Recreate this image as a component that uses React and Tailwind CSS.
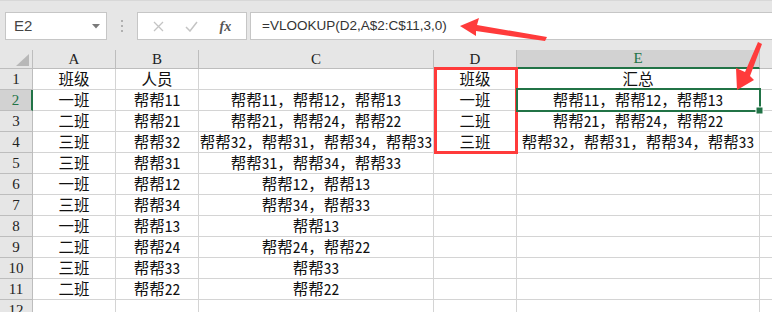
import React from "react"

const cols = [
  { key: "A", w: "w-[83px]" },
  { key: "B", w: "w-[83px]" },
  { key: "C", w: "w-[235px]" },
  { key: "D", w: "w-[83px]" },
  { key: "E", w: "w-[243px]" },
]

const rows = [
  ["班级", "人员", "", "班级", "汇总"],
  ["一班", "帮帮11", "帮帮11，帮帮12，帮帮13", "一班", "帮帮11，帮帮12，帮帮13"],
  ["二班", "帮帮21", "帮帮21，帮帮24，帮帮22", "二班", "帮帮21，帮帮24，帮帮22"],
  ["三班", "帮帮32", "帮帮32，帮帮31，帮帮34，帮帮33", "三班", "帮帮32，帮帮31，帮帮34，帮帮33"],
  ["三班", "帮帮31", "帮帮31，帮帮34，帮帮33", "", ""],
  ["一班", "帮帮12", "帮帮12，帮帮13", "", ""],
  ["三班", "帮帮34", "帮帮34，帮帮33", "", ""],
  ["一班", "帮帮13", "帮帮13", "", ""],
  ["二班", "帮帮24", "帮帮24，帮帮22", "", ""],
  ["三班", "帮帮33", "帮帮33", "", ""],
  ["二班", "帮帮22", "帮帮22", "", ""],
  ["", "", "", "", ""],
]

const cjk = { fontFamily: '"Noto Sans Mono CJK SC", "Noto Sans CJK SC", sans-serif' }
const serif = { fontFamily: '"Liberation Serif", serif' }
const sans = { fontFamily: '"Liberation Sans", Arial, sans-serif' }

function Toolbar() {
  return (
    <div className="h-[50px] bg-[#e6e6e6] border-t border-[#d8d8d8] flex items-start pt-[11px]">
      <div className="ml-[5px] w-[102px] h-[28px] bg-white border border-[#c6c6c6] flex items-center justify-between pl-[8px] pr-[6px]">
        <span className="text-[15px] text-[#444]" style={sans}>E2</span>
        <svg width="8" height="5" viewBox="0 0 8 5"><path d="M0 0h8L4 4.5z" fill="#7a7a7a" /></svg>
      </div>
      <div className="w-[30px] h-[28px] flex flex-col items-center justify-center gap-[3px]">
        <div className="w-[2px] h-[2px] bg-[#b0b0b0]" />
        <div className="w-[2px] h-[2px] bg-[#b0b0b0]" />
        <div className="w-[2px] h-[2px] bg-[#b0b0b0]" />
      </div>
      <div className="w-[110px] h-[28px] bg-white border border-[#c6c6c6] flex items-center justify-around px-[4px]">
        <svg width="11" height="11" viewBox="0 0 11 11"><path d="M1 1l9 9M10 1l-9 9" stroke="#c4c4c4" strokeWidth="1.3" /></svg>
        <svg width="13" height="11" viewBox="0 0 13 11"><path d="M1 6l4 4 7-9" stroke="#c4c4c4" strokeWidth="1.5" fill="none" /></svg>
        <span className="text-[14px] italic text-[#555] font-bold" style={serif}>fx</span>
      </div>
      <div className="ml-[3px] flex-1 h-[28px] bg-white border border-r-0 border-[#c6c6c6] flex items-center pl-[11px]">
        <span className="text-[13.5px] text-[#333]" style={sans}>=VLOOKUP(D2,A$2:C$11,3,0)</span>
      </div>
    </div>
  )
}

function HeaderRow() {
  return (
    <div className="flex h-[19px]">
      <div className="w-[33px] bg-[#e6e6e6] border-r border-b border-[#bdbdbd] relative">
        <svg className="absolute right-[3px] bottom-[2px]" width="13" height="12" viewBox="0 0 13 12"><path d="M13 0v12H0z" fill="#b8b8b8" /></svg>
      </div>
      {cols.map((c) => (
        <div
          key={c.key}
          className={`${c.w} flex items-center justify-center border-r text-[15px] leading-none ${
            c.key === "E"
              ? "bg-[#d2d2d2] text-[#217346] border-b-2 border-b-[#217346] border-r-[#bdbdbd]"
              : "bg-[#e6e6e6] text-[#222] border-b border-[#bdbdbd]"
          }`}
          style={serif}
        >
          {c.key}
        </div>
      ))}
      <div className="flex-1 bg-[#e6e6e6] border-b border-[#bdbdbd]" />
    </div>
  )
}

function DataRow({ n, cells }) {
  const sel = n === 2
  return (
    <div className="flex h-[21px]">
      <div
        className={`w-[33px] flex items-center justify-center border-b border-[#bdbdbd] text-[15px] leading-none ${
          sel ? "bg-[#d2d2d2] text-[#217346] border-r-2 border-r-[#217346]" : "bg-[#e6e6e6] text-[#222] border-r"
        }`}
        style={serif}
      >
        {n}
      </div>
      {cols.map((c, i) => (
        <div
          key={c.key}
          className={`${c.w} flex items-center justify-center border-r border-b border-[#d4d4d4] text-[15.5px] leading-none whitespace-nowrap text-[#111]`}
          style={cjk}
        >
          {cells[i]}
        </div>
      ))}
      <div className="flex-1 border-b border-[#d4d4d4]" />
    </div>
  )
}

function Overlay() {
  return (
    <svg className="absolute inset-0 pointer-events-none" width="772" height="312" viewBox="0 0 772 312">
      <rect x="435.5" y="68.5" width="81" height="84" fill="none" stroke="#ff3b3b" strokeWidth="3" />
      <rect x="517" y="89" width="243" height="22" fill="none" stroke="#217346" strokeWidth="2" />
      <rect x="756" y="107" width="7" height="7" fill="#217346" stroke="#fff" strokeWidth="1" />
      <polygon points="460,26 479,18 477,25 547,37 545,41 476,31 476,36" fill="#ff3b3b" />
      <polygon points="758,42 762,44 750,76 754,80 737,90 736,68 745,72" fill="#ff3b3b" />
    </svg>
  )
}

export default function App() {
  return (
    <div className="relative w-[772px] h-[312px] overflow-hidden bg-white">
      <Toolbar />
      <HeaderRow />
      {rows.map((r, i) => (
        <DataRow key={i} n={i + 1} cells={r} />
      ))}
      <Overlay />
    </div>
  )
}
